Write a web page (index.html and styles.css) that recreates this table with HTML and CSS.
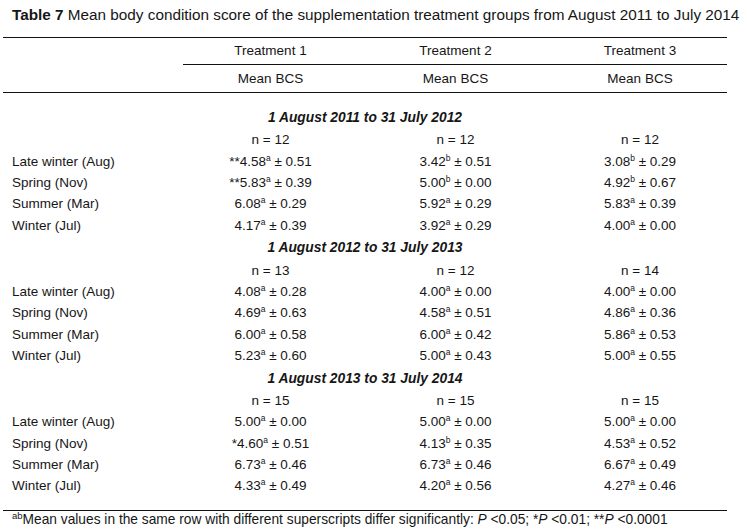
FILE: index.html
```html
<!DOCTYPE html>
<html>
<head>
<meta charset="utf-8">
<link rel="stylesheet" href="styles.css">
</head>
<body>
<div class="page">
  <div class="title"><b>Table 7</b> Mean body condition score of the supplementation treatment groups from August 2011 to July 2014</div>
  <div class="tbl">
    <div class="row hrow1">
      <div></div><div class="ul">Treatment 1</div><div class="ul">Treatment 2</div><div class="ul">Treatment 3</div>
    </div>
    <div class="row hrow2">
      <div></div><div>Mean BCS</div><div>Mean BCS</div><div>Mean BCS</div>
    </div>
    <div class="body">
      <div class="sec">1 August 2011 to 31 July 2012</div>
      <div class="row r"><div></div><div class="v">n = 12</div><div class="v">n = 12</div><div class="v">n = 12</div></div>
      <div class="row r"><div class="lbl">Late winter (Aug)</div><div class="v">**4.58<sup>a</sup> ± 0.51</div><div class="v">3.42<sup>b</sup> ± 0.51</div><div class="v">3.08<sup>b</sup> ± 0.29</div></div>
      <div class="row r"><div class="lbl">Spring (Nov)</div><div class="v">**5.83<sup>a</sup> ± 0.39</div><div class="v">5.00<sup>b</sup> ± 0.00</div><div class="v">4.92<sup>b</sup> ± 0.67</div></div>
      <div class="row r"><div class="lbl">Summer (Mar)</div><div class="v">6.08<sup>a</sup> ± 0.29</div><div class="v">5.92<sup>a</sup> ± 0.29</div><div class="v">5.83<sup>a</sup> ± 0.39</div></div>
      <div class="row r"><div class="lbl">Winter (Jul)</div><div class="v">4.17<sup>a</sup> ± 0.39</div><div class="v">3.92<sup>a</sup> ± 0.29</div><div class="v">4.00<sup>a</sup> ± 0.00</div></div>
      <div class="sec">1 August 2012 to 31 July 2013</div>
      <div class="row r"><div></div><div class="v">n = 13</div><div class="v">n = 12</div><div class="v">n = 14</div></div>
      <div class="row r"><div class="lbl">Late winter (Aug)</div><div class="v">4.08<sup>a</sup> ± 0.28</div><div class="v">4.00<sup>a</sup> ± 0.00</div><div class="v">4.00<sup>a</sup> ± 0.00</div></div>
      <div class="row r"><div class="lbl">Spring (Nov)</div><div class="v">4.69<sup>a</sup> ± 0.63</div><div class="v">4.58<sup>a</sup> ± 0.51</div><div class="v">4.86<sup>a</sup> ± 0.36</div></div>
      <div class="row r"><div class="lbl">Summer (Mar)</div><div class="v">6.00<sup>a</sup> ± 0.58</div><div class="v">6.00<sup>a</sup> ± 0.42</div><div class="v">5.86<sup>a</sup> ± 0.53</div></div>
      <div class="row r"><div class="lbl">Winter (Jul)</div><div class="v">5.23<sup>a</sup> ± 0.60</div><div class="v">5.00<sup>a</sup> ± 0.43</div><div class="v">5.00<sup>a</sup> ± 0.55</div></div>
      <div class="sec">1 August 2013 to 31 July 2014</div>
      <div class="row r"><div></div><div class="v">n = 15</div><div class="v">n = 15</div><div class="v">n = 15</div></div>
      <div class="row r"><div class="lbl">Late winter (Aug)</div><div class="v">5.00<sup>a</sup> ± 0.00</div><div class="v">5.00<sup>a</sup> ± 0.00</div><div class="v">5.00<sup>a</sup> ± 0.00</div></div>
      <div class="row r"><div class="lbl">Spring (Nov)</div><div class="v">*4.60<sup>a</sup> ± 0.51</div><div class="v">4.13<sup>b</sup> ± 0.35</div><div class="v">4.53<sup>a</sup> ± 0.52</div></div>
      <div class="row r"><div class="lbl">Summer (Mar)</div><div class="v">6.73<sup>a</sup> ± 0.46</div><div class="v">6.73<sup>a</sup> ± 0.46</div><div class="v">6.67<sup>a</sup> ± 0.49</div></div>
      <div class="row r"><div class="lbl">Winter (Jul)</div><div class="v">4.33<sup>a</sup> ± 0.49</div><div class="v">4.20<sup>a</sup> ± 0.56</div><div class="v">4.27<sup>a</sup> ± 0.46</div></div>
    </div>
  </div>
  <div class="foot"><sup>ab</sup>Mean values in the same row with different superscripts differ significantly: <i>P</i> &lt;0.05; *<i>P</i> &lt;0.01; **<i>P</i> &lt;0.0001</div>
</div>
</body>
</html>
```

FILE: styles.css
```css
html, body {
  margin: 0;
  padding: 0;
  background: #ffffff;
}
body {
  font-family: "Liberation Sans", Arial, sans-serif;
  font-size: 13.5px;
  color: #161616;
}
.page {
  width: 747px;
  height: 530px;
  overflow: hidden;
}
.title {
  height: 37px;
  box-sizing: border-box;
  padding: 6px 0 0 12px;
  line-height: 18px;
  font-size: 15.3px;
  white-space: nowrap;
}
.tbl {
  margin-left: 3px;
  width: 724px;
}
.row {
  display: grid;
  grid-template-columns: 180px 175px 195px 174px;
}
.row > div {
  white-space: nowrap;
}
.hrow1 {
  border-top: 1px solid #111;
}
.hrow1 > div {
  height: 27px;
  box-sizing: border-box;
  line-height: 26px;
  text-align: center;
}
.hrow1 > div.ul {
  border-bottom: 1px solid #111;
}
.hrow2 {
  border-bottom: 1px solid #111;
}
.hrow2 > div {
  height: 27px;
  line-height: 27px;
  text-align: center;
}
.body {
  padding: 13px 0 13px;
  border-bottom: 1px solid #111;
}
.sec {
  height: 23.3px;
  line-height: 23.3px;
  font-weight: bold;
  font-style: italic;
  font-size: 13.8px;
  text-align: center;
  padding: 0 180px 0 180px;
  white-space: nowrap;
}
.r > div {
  height: 21.4px;
  line-height: 21.4px;
}
.v {
  text-align: center;
}
.lbl {
  padding-left: 9px;
}
sup {
  font-size: 8.5px;
  line-height: 0;
  vertical-align: 5px;
}
.foot {
  padding-left: 12px;
  padding-top: 1px;
  line-height: 16px;
  font-size: 13.75px;
  white-space: nowrap;
}
.foot sup {
  font-size: 9.5px;
  vertical-align: 5px;
}
```
